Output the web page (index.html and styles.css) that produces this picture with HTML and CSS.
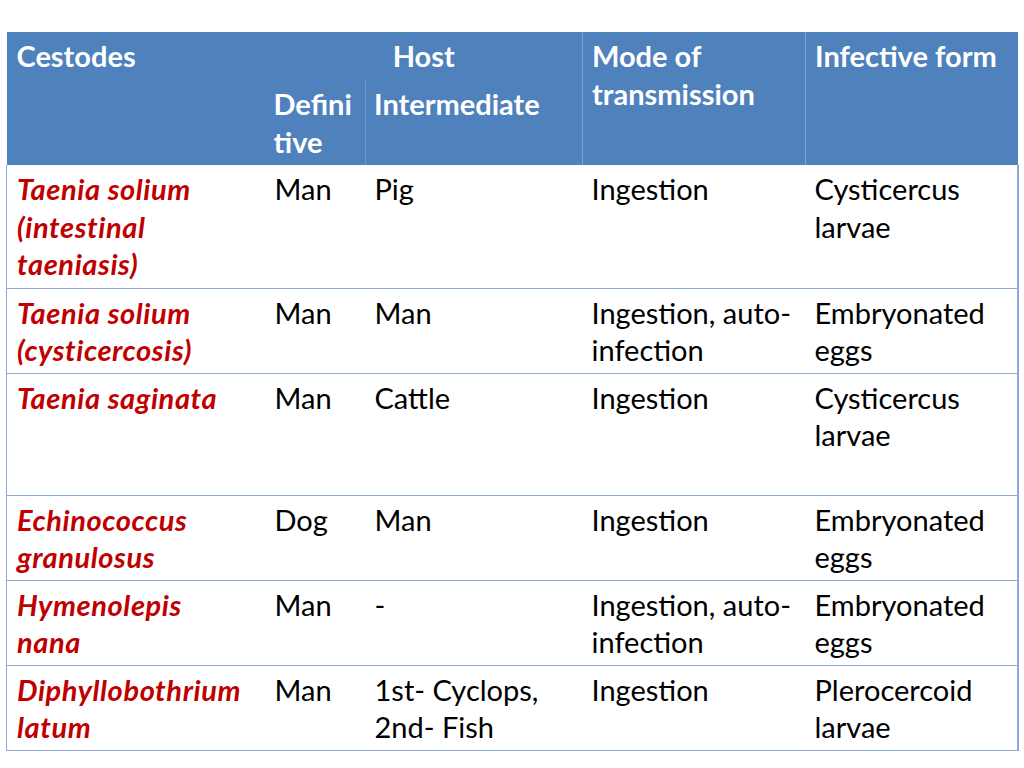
FILE: index.html
```html
<!DOCTYPE html>
<html lang="en">
<head>
<meta charset="utf-8">
<title>Cestodes</title>
<link rel="stylesheet" href="styles.css">
</head>
<body>
<table class="cestodes">
  <colgroup>
    <col class="c1"><col class="c2"><col class="c3"><col class="c4"><col class="c5">
  </colgroup>
  <thead>
    <tr class="h1">
      <th rowspan="2" class="first">Cestodes</th>
      <th colspan="2" class="host">Host</th>
      <th rowspan="2" class="sep">Mode of transmission</th>
      <th rowspan="2" class="last">Infective form</th>
    </tr>
    <tr class="h2">
      <th class="sub sub-def">Defini<br>tive</th>
      <th class="sub sub-int">Intermediate</th>
    </tr>
  </thead>
  <tbody>
    <tr class="r3">
      <td class="name">Taenia solium<br>(intestinal<br>taeniasis)</td>
      <td>Man</td><td>Pig</td><td>Ingestion</td><td class="last">Cysticercus larvae</td>
    </tr>
    <tr class="r2">
      <td class="name">Taenia solium<br>(cysticercosis)</td>
      <td>Man</td><td>Man</td><td>Ingestion, auto-infection</td><td class="last">Embryonated eggs</td>
    </tr>
    <tr class="r3b">
      <td class="name">Taenia saginata</td>
      <td>Man</td><td>Cattle</td><td>Ingestion</td><td class="last">Cysticercus larvae</td>
    </tr>
    <tr class="r2">
      <td class="name">Echinococcus<br>granulosus</td>
      <td>Dog</td><td>Man</td><td>Ingestion</td><td class="last">Embryonated eggs</td>
    </tr>
    <tr class="r2">
      <td class="name">Hymenolepis<br>nana</td>
      <td>Man</td><td>-</td><td>Ingestion, auto-infection</td><td class="last">Embryonated eggs</td>
    </tr>
    <tr class="r2">
      <td class="name">Diphyllobothrium<br>latum</td>
      <td>Man</td><td>1st- Cyclops, 2nd- Fish</td><td>Ingestion</td><td class="last">Plerocercoid larvae</td>
    </tr>
  </tbody>
</table>
</body>
</html>
```
FILE: styles.css
```css
html, body {
  margin: 0;
  padding: 0;
  background: #ffffff;
}

body {
  font-family: "Lato", "Liberation Sans", sans-serif;
  font-size: 29px;
  line-height: 37.5px;
  color: #000000;
}

.cestodes {
  margin: 32px 0 0 6px;
  width: 1011px;
  table-layout: fixed;
  border-collapse: collapse;
  border-spacing: 0;
}

.c1 { width: 259px; }
.c2 { width: 100px; }
.c3 { width: 217px; }
.c4 { width: 223px; }
.c5 { width: 212px; }

.cestodes th,
.cestodes td {
  padding: 5px 4px 0 9px;
  text-align: left;
  vertical-align: top;
  box-sizing: border-box;
}

.cestodes thead th {
  background: #4f81bd;
  color: #ffffff;
  font-weight: 700;
}

.cestodes th.first { padding-left: 10px; }

.h1 { height: 48px; }
.h2 { height: 85px; }

.cestodes th.host {
  text-align: center;
  border-right: 1px solid #7da1d4;
  padding-left: 0;
  padding-right: 0;
}

.cestodes th.sep {
  border-right: 1px solid #7da1d4;
}

.cestodes th.sub {
  padding-left: 8px;
  padding-top: 5px;
}

.cestodes th.sub-def {
  border-right: 1px solid #6d95cc;
}

.cestodes th.sub-int {
  border-right: 1px solid #7da1d4;
}

.cestodes tbody td {
  border-bottom: 1.5px solid #8eaadb;
}

.cestodes tbody td:first-child {
  border-left: 1.5px solid #8eaadb;
  padding-left: 10px;
}

.cestodes tbody td.last {
  border-right: 2px solid #8eaadb;
}

.r3 { height: 123px; }
.r2 { height: 85px; }
.r3b { height: 122px; }

.name {
  color: #c00000;
  font-weight: 700;
  font-style: italic;
  letter-spacing: 0.6px;
}
```
